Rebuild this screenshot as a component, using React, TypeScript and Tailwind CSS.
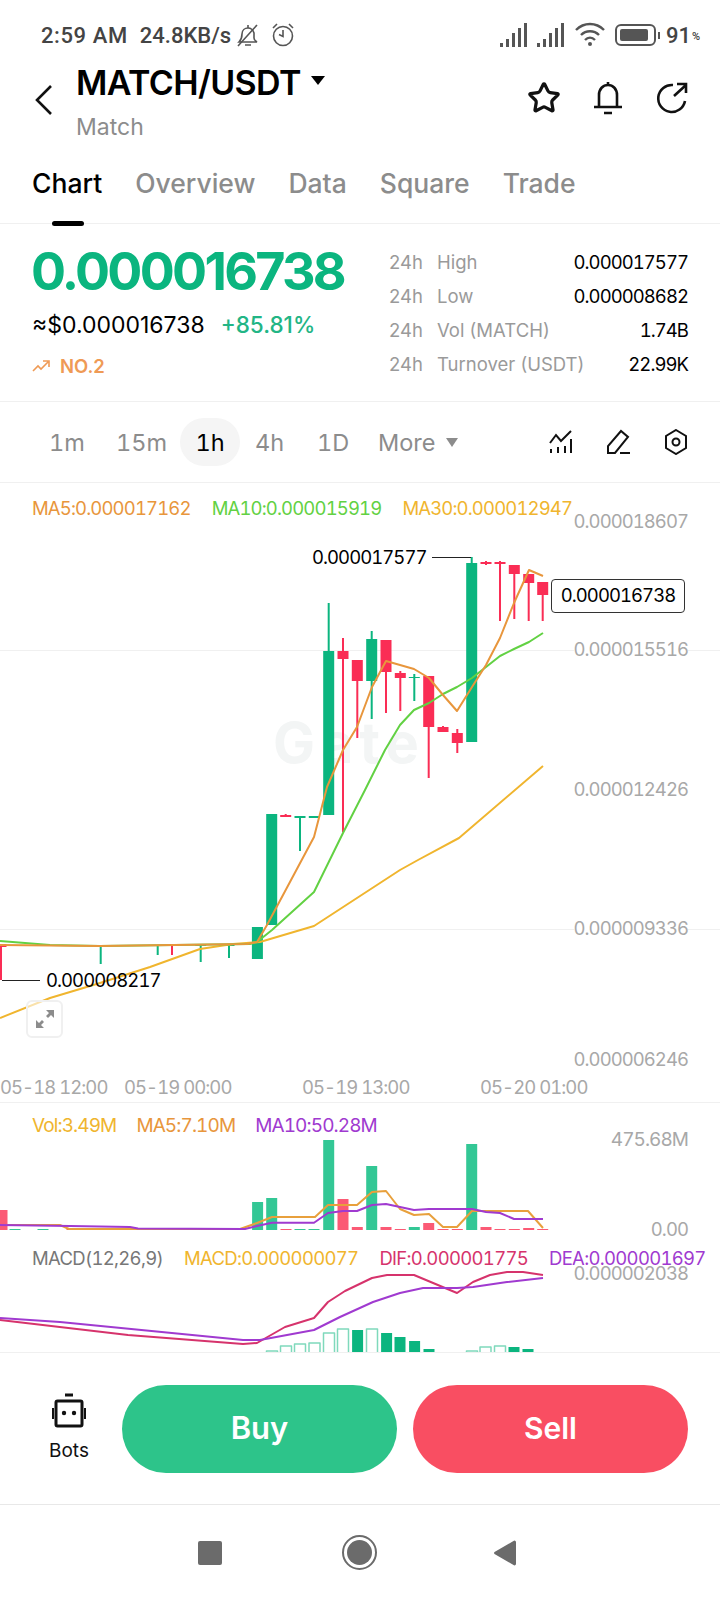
import { Star } from "lucide-react";

// candles: x, wick top, wick bottom, body top, body bottom, up
const candles: [number, number, number, number, number, boolean][] = [
  [1, 944, 980, 944, 947, false],
  [100.7, 945, 964, 945, 946, true],
  [157.7, 945, 955, 945, 946, true],
  [172, 945, 955, 945, 946, false],
  [200.7, 945, 962, 945, 946, true],
  [229, 945, 958, 945, 946, true],
  [257.4, 927, 959, 927, 959, true],
  [271.7, 814, 925, 814, 925, true],
  [285.7, 814, 817, 815, 817, false],
  [300, 816, 851, 816, 818, true],
  [314.3, 816, 818, 816, 818, true],
  [328.7, 603, 815, 651, 815, true],
  [343, 638, 832, 651, 659, false],
  [357.3, 660, 738, 660, 681, false],
  [371.7, 631, 719, 639, 681, true],
  [386, 640, 713, 640, 672, false],
  [400.3, 671, 711, 673, 678, false],
  [414.3, 674, 701, 677, 678, true],
  [428.7, 676, 778, 676, 727, false],
  [443, 726, 732, 727, 732, false],
  [457.3, 729, 753, 733, 743, false],
  [471.7, 557, 742, 563, 742, true],
  [486, 561, 565, 562, 564, false],
  [500, 561, 621, 562, 564, false],
  [514.3, 565, 619, 565, 574, false],
  [528.7, 574, 621, 574, 583, false],
  [542.7, 582, 621, 582, 595, false],
];

const ma5 = "0,945 100,946 247,944 257,942 267,925 314,837 327,787 343,750 357,727 372,687 386,661 400,665 414,669 429,678 443,695 457,711 472,687 486,665 500,638 514,603 529,570 543,576";
const ma10 = "0,941 50,945 100,946 250,944 257,942 272,930 314,892 343,833 365,790 385,750 400,725 414,710 429,703 443,694 457,687 472,678 486,667 500,656 514,649 529,642 543,633";
const ma30 = "0,1018 50,998 100,983 150,967 200,949 233,944 260,942 314,926 400,870 418,860 459,838 543,766";

const volBars: [number, number, boolean][] = [
  [2, 1210, false], [257.6, 1202, true], [271.7, 1198, true], [286, 1229, false], [300, 1229, true], [314, 1229, true],
  [328.7, 1140, true], [343, 1199, false], [357.3, 1227, false], [371.7, 1166, true], [386, 1227, false], [400.3, 1229, false],
  [414.3, 1227, true], [428.7, 1223, false], [443, 1229, false], [457.3, 1229, false], [471.7, 1144, true], [486, 1227, false],
  [500, 1229, false], [514.3, 1229, false], [528.7, 1228, false], [542.7, 1229, false],
  [15, 1229, true], [43, 1229, true], [72, 1229, false],
];

const volMa5 = "0,1225 60,1225 69,1229 138,1229 240,1229 257,1223 272,1217 315,1217 328,1205 357,1205 372,1192 386,1191 400,1209 414,1215 429,1214 443,1227 457,1227 472,1211 486,1211 528,1211 543,1228";
const volMa10 = "0,1225 70,1226 130,1227 138,1228.5 245,1229 257,1226 272,1222.7 314,1222.7 328,1213 343,1211 357,1211 372,1205 386,1204 400,1207 414,1210 429,1209 472,1209 486,1212 500,1213 514,1219 543,1219";
const dif = "0,1320 128,1335 243,1344 257,1343 285,1327 314,1318 328,1302 345,1291 372,1278 387,1275 414,1275 457,1293 473,1282 490,1275 507,1272 523,1272 543,1275";
const dea = "0,1318 60,1322 243,1340 260,1340 314,1330 340,1317 373,1302 400,1293 423,1288 457,1288 473,1287 507,1282 543,1278";

const macdBars: [number, number, boolean][] = [
  [272, 1351, false], [286, 1346, false], [300, 1344, false], [314.5, 1343, false], [329, 1333, false], [343, 1329, false],
  [357.6, 1330, true], [372, 1329, false], [386.6, 1333, true], [400, 1337, true], [414.6, 1341, true], [429, 1349, true],
  [472, 1351, false], [485.5, 1347, false], [500, 1346, false], [514, 1347, true], [528, 1349, true],
];

function Signal() {
  return (
    <svg width="28" height="26" viewBox="0 0 28 26" fill="#555">
      <rect x="0" y="21" width="3" height="4" />
      <rect x="6" y="17" width="3" height="8" />
      <rect x="12" y="11" width="3" height="14" />
      <rect x="18" y="6" width="3" height="19" />
      <rect x="24" y="1" width="3" height="24" />
    </svg>
  );
}

export default function App() {
  return (
    <div className="w-[720px] h-[1600px] bg-white flex flex-col overflow-hidden font-['Inter',sans-serif]">
      {/* status bar */}
      <div className="h-[56px] pt-[14px] pl-[41px] pr-[20px] flex items-center justify-between text-[#444] font-['Roboto',sans-serif] font-medium text-[22px]">
        <div className="flex items-center">
          <span className="tracking-[0.6px]">2:59 AM</span>
          <span className="ml-[12px]">24.8KB/s</span>
          <svg className="ml-[5px]" width="24" height="26" viewBox="0 0 24 26" fill="none" stroke="#555" strokeWidth="1.6">
            <path d="M3 20c2-2 3-4 3-8 0-4 3-6 6-6s5 2 6 5v5c0 2 1 3 3 4z" />
            <path d="M9 23h6M2 24 21 3M12 3v3" />
          </svg>
          <svg className="ml-[11px]" width="24" height="26" viewBox="0 0 24 26" fill="none" stroke="#555" strokeWidth="1.6">
            <circle cx="12" cy="14" r="9.5" />
            <path d="M12 8v6.5l-4-2M2 6l4-4M22 6l-4-4" />
          </svg>
        </div>
        <div className="flex items-center">
          <Signal />
          <div className="ml-[9px]"><Signal /></div>
          <svg className="ml-[10px]" width="30" height="28" viewBox="0 0 30 28" fill="none" stroke="#555" strokeWidth="2.4">
            <path d="M1 9c8-8 20-8 28 0M6 14c5-5 13-5 18 0M10 19c3-3 7-3 10 0" />
            <circle cx="15" cy="23" r="2" fill="#555" stroke="none" />
          </svg>
          <div className="ml-[10px] w-[41px] h-[22px] rounded-[6px] border-2 border-[#555] p-[3px] flex">
            <div className="w-[90%] bg-[#555] rounded-[2px]" />
          </div>
          <div className="w-[2px] h-[7px] bg-[#555] ml-[2px]" />
          <span className="ml-[6px]">91</span>
          <span className="text-[11px] ml-[1px] mt-[4px]">%</span>
        </div>
      </div>

      {/* header */}
      <div className="h-[92px] flex items-start relative">
        <svg className="absolute left-[34px] top-[28px]" width="20" height="32" viewBox="0 0 20 32" fill="none" stroke="#111" strokeWidth="2.6">
          <path d="M17 2 3 16l14 14" />
        </svg>
        <div className="ml-[76px] flex flex-col">
          <div className="flex items-center h-[50px] mt-[1px]">
            <span className="text-[34px] font-semibold text-black tracking-[-0.6px]">MATCH/USDT</span>
            <span className="ml-[10px] w-0 h-0 border-l-[7px] border-r-[7px] border-t-[9px] border-l-transparent border-r-transparent border-t-black mt-[-4px]" />
          </div>
          <span className="text-[23px] text-[#8c8c8c] mt-[6px] leading-[28px]">Match</span>
        </div>
        <div className="ml-auto mr-[31px] mt-[24px] flex items-center gap-[30px]">
          <Star size={34} strokeWidth={2.3} color="#111" />
          <svg width="34" height="36" viewBox="0 0 34 36" fill="none" stroke="#111" strokeWidth="2.6">
            <path d="M8 27V15c0-6 4-10 9-10s9 4 9 10v12M3 27h28M13 33h8M17 2v3" />
          </svg>
          <svg width="34" height="34" viewBox="0 0 34 34" fill="none" stroke="#111" strokeWidth="2.6">
            <path d="M30 20A13.5 13.5 0 1 1 18 4M19 15 31 4M22 3h9v9" />
          </svg>
        </div>
      </div>

      {/* tabs */}
      <div className="h-[76px] border-b border-[#f0f0f0] pl-[32px] flex items-start pt-[19px] gap-[33px] text-[26.5px] text-[#8c8c8c] font-medium leading-[32px]">
        <div className="relative text-black">
          Chart
          <div className="absolute left-[20px] top-[54px] w-[32px] h-[5px] rounded-full bg-black" />
        </div>
        <span>Overview</span>
        <span>Data</span>
        <span>Square</span>
        <span>Trade</span>
      </div>

      {/* price stats */}
      <div className="h-[178px] border-b border-[#f0f0f0] pl-[32px] pr-[32px] flex justify-between">
        <div className="flex flex-col">
          <div className="text-[52px] font-bold text-[#0bb57f] leading-[60px] mt-[18px] tracking-[-2.7px] ml-[-1px]">0.000016738</div>
          <div className="flex items-center mt-[8px] text-[23px] leading-[30px]">
            <span className="text-black">≈$0.000016738</span>
            <span className="ml-[16px] text-[22.5px] text-[#22b585] font-medium">+85.81%</span>
          </div>
          <div className="flex items-center mt-[13px]">
            <svg width="18" height="14" viewBox="0 0 18 14" fill="none" stroke="#ef9a55" strokeWidth="1.6">
              <path d="M1 12 6 7l3 3 7-7M11 2h6v6" />
            </svg>
            <span className="ml-[10px] text-[18.5px] font-semibold text-[#ef9a55] leading-[26px]">NO.2</span>
          </div>
        </div>
        <div className="w-[299px] flex flex-col pt-[21px] text-[18.5px] leading-[34px]">
          <StatRow name="High" value="0.000017577" />
          <StatRow name="Low" value="0.000008682" />
          <StatRow name="Vol (MATCH)" value="1.74B" />
          <StatRow name="Turnover (USDT)" value="22.99K" />
        </div>
      </div>

      {/* timeframes */}
      <div className="h-[81px] border-b border-[#f0f0f0] flex items-center text-[23.5px] tabular-nums text-[#8c8c8c] relative">
        <span className="ml-[49px] w-[34px] mt-[2px]">1m</span>
        <span className="ml-[33px] w-[48px] mt-[2px]">15m</span>
        <span className="ml-[16px] w-[60px] h-[48px] pt-[2px] rounded-full bg-[#f5f5f5] text-black flex items-center justify-center">1h</span>
        <span className="ml-[15px] w-[29px] mt-[2px]">4h</span>
        <span className="ml-[33px] w-[28px] mt-[2px]">1D</span>
        <span className="ml-[33px] mt-[2px]">More</span>
        <span className="ml-[11px] w-0 h-0 border-l-[6px] border-r-[6px] border-t-[9px] border-l-transparent border-r-transparent border-t-[#8c8c8c]" />
        <div className="ml-auto mr-[32px] flex items-center gap-[33px]">
          <svg width="24" height="24" viewBox="0 0 24 24" fill="none" stroke="#111" strokeWidth="2">
            <path d="M1 13 7 5l5 6 10-10M2 23v-4M9 23v-6M16 23v-7M22 23V9" />
          </svg>
          <svg width="25" height="26" viewBox="0 0 25 26" fill="none" stroke="#111" strokeWidth="2">
            <path d="M2 24v-7L15 2l7 6L9 24zM14 24h10" />
          </svg>
          <svg width="24" height="26" viewBox="0 0 24 26" fill="none" stroke="#111" strokeWidth="2">
            <path d="m12 1 10 6v12l-10 6-10-6V7z" />
            <circle cx="12" cy="13" r="3.5" />
          </svg>
        </div>
      </div>

      {/* main chart */}
      <div className="h-[620px] border-b border-[#f0f0f0] relative text-[18.5px] tabular-nums tracking-[-0.95px]">
        <div className="absolute left-[273px] top-[230px] text-[56px] font-bold leading-[60px] text-[#f3f5f5] tracking-[6px]">Gate</div>

        <svg className="absolute inset-0" width="720" height="619" viewBox="0 483 720 619" fill="none" strokeLinejoin="round">
          <path d="M0 650.5h720M0 929.5h720" stroke="#f0f0f0" />
          {candles.map(([x, wt, wb, bt, bb, up]) => (
            <g key={x} fill={up ? "#0bb57f" : "#fa2d55"}>
              <rect x={x - 1} y={wt} width="2" height={wb - wt} />
              <rect x={x - 5.5} y={bt} width="11" height={bb - bt} />
            </g>
          ))}
          <polyline points={ma30} stroke="#f0b52e" strokeWidth="2" />
          <polyline points={ma10} stroke="#62d143" strokeWidth="2" />
          <polyline points={ma5} stroke="#e8963c" strokeWidth="2" />
          <path d="M432 557.5h39M2 980.5h38" stroke="#222" />
        </svg>

        <div className="relative pl-[32px] pt-[13px] flex gap-[21px] leading-[24px] tracking-[-0.85px]">
          <span className="text-[#e8963c]">MA5:0.000017162</span>
          <span className="text-[#62d143]">MA10:0.000015919</span>
          <span className="text-[#f0b52e]">MA30:0.000012947</span>
        </div>

        <span className="absolute right-[32px] top-[26px] leading-[24px] text-[#a8a8a8]">0.000018607</span>
        <span className="absolute right-[32px] top-[154px] leading-[24px] text-[#a8a8a8] bg-white">0.000015516</span>
        <span className="absolute right-[32px] top-[294px] leading-[24px] text-[#a8a8a8]">0.000012426</span>
        <span className="absolute right-[32px] top-[433px] leading-[24px] text-[#a8a8a8] bg-white">0.000009336</span>
        <span className="absolute right-[32px] top-[564px] leading-[24px] text-[#a8a8a8]">0.000006246</span>

        <span className="absolute left-[312px] top-[62px] leading-[24px] text-black">0.000017577</span>
        <span className="absolute left-[46px] top-[485px] leading-[24px] text-black">0.000008217</span>
        <span className="absolute left-[551px] top-[96px] w-[134px] h-[34px] rounded-[4px] border border-[#333] bg-white flex items-center justify-center text-black">0.000016738</span>

        <div className="absolute left-[26px] top-[517px] w-[37px] h-[38px] rounded-[6px] border-2 border-[#f0f0f0] bg-white/60 flex items-center justify-center">
          <svg width="20" height="20" viewBox="0 0 20 20" fill="#8c8c8c">
            <path d="M11 1h8v8l-3-3-3 3-2-2 3-3zM9 19H1v-8l3 3 3-3 2 2-3 3z" />
          </svg>
        </div>

        <span className="absolute left-0 top-[592px] leading-[24px] text-[#a8a8a8]">05-18 12:00</span>
        <span className="absolute left-[124px] top-[592px] leading-[24px] text-[#a8a8a8]">05-19 00:00</span>
        <span className="absolute left-[302px] top-[592px] leading-[24px] text-[#a8a8a8]">05-19 13:00</span>
        <span className="absolute left-[480px] top-[592px] leading-[24px] text-[#a8a8a8]">05-20 01:00</span>
      </div>

      {/* volume + macd */}
      <div className="h-[250px] border-b border-[#f0f0f0] relative text-[18.5px] tabular-nums tracking-[-0.95px] overflow-hidden">
        <svg className="absolute inset-0" width="720" height="249" viewBox="0 1103 720 249" fill="none" strokeLinejoin="round">
          {volBars.map(([x, top, up]) => (
            <rect key={x} x={x - 5.5} y={top} width="11" height={1230 - top} fill={up ? "#33c795" : "#fb5a75"} />
          ))}
          <polyline points={volMa5} stroke="#e8a03c" strokeWidth="2" />
          <polyline points={volMa10} stroke="#a03ad0" strokeWidth="2" />
          {macdBars.map(([x, top, filled]) => (
            <rect key={x} x={x - 5.5} y={top} width="11" height={1360 - top} fill={filled ? "#0bb57f" : "#fff"} stroke={filled ? "none" : "#7fd9bc"} strokeWidth="1.5" />
          ))}
          <polyline points={dif} stroke="#d6336c" strokeWidth="2" />
          <polyline points={dea} stroke="#a03ad0" strokeWidth="2" />
        </svg>

        <div className="relative pl-[32px] pt-[11px] flex gap-[20px] leading-[24px] text-[19px] tracking-[-0.9px]">
          <span className="text-[#f0b52e]">Vol:3.49M</span>
          <span className="text-[#e8963c]">MA5:7.10M</span>
          <span className="text-[#a03ad0]">MA10:50.28M</span>
        </div>
        <span className="absolute right-[32px] top-[25px] leading-[24px] text-[19px] text-[#a8a8a8]">475.68M</span>
        <span className="absolute right-[32px] top-[114px] leading-[24px] text-[#a8a8a8]">0.00</span>
        <span className="absolute right-[32px] top-[158px] leading-[24px] text-[#a8a8a8]">0.000002038</span>
        <div className="absolute left-[32px] top-[143px] flex gap-[21px] leading-[24px] whitespace-nowrap tracking-[-0.7px]">
          <span className="text-[#777]">MACD(12,26,9)</span>
          <span className="text-[#f0b52e]">MACD:0.000000077</span>
          <span className="text-[#d6336c]">DIF:0.000001775</span>
          <span className="text-[#a03ad0]">DEA:0.000001697</span>
        </div>
      </div>

      {/* actions */}
      <div className="h-[152px] border-b border-[#e8e8e8] flex items-center pl-[32px] pr-[32px]">
        <div className="w-[74px] flex flex-col items-center mt-[-2px]">
          <svg width="36" height="36" viewBox="0 0 36 36" fill="none">
            <path d="M14 2h8" stroke="#111" strokeWidth="3" />
            <rect x="5" y="8" width="26" height="25" rx="1.5" stroke="#111" strokeWidth="3" />
            <path d="M2 15v11M34 15v11" stroke="#111" strokeWidth="2" />
            <circle cx="13" cy="20" r="2.2" fill="#111" />
            <circle cx="23" cy="20" r="2.2" fill="#111" />
          </svg>
          <span className="text-[19px] text-[#111] mt-[10px] leading-[24px]">Bots</span>
        </div>
        <div className="ml-[16px] w-[275px] h-[88px] rounded-[44px] bg-[#2dc48a] flex items-center justify-center text-white text-[31px] font-semibold">Buy</div>
        <div className="ml-[16px] w-[275px] h-[88px] rounded-[44px] bg-[#f94e62] flex items-center justify-center text-white text-[30px] font-semibold">Sell</div>
      </div>

      {/* nav bar */}
      <div className="flex-1 relative flex items-center">
        <div className="ml-[198px] w-[24px] h-[24px] rounded-[2px] bg-[#6b6b6b]" />
        <div className="ml-[120px] w-[35px] h-[35px] rounded-full border-[2.5px] border-[#6b6b6b] p-[3px]">
          <div className="w-full h-full rounded-full bg-[#6b6b6b]" />
        </div>
        <svg className="ml-[116px]" width="24" height="28" viewBox="0 0 24 28" fill="#6b6b6b">
          <path d="M23 3v22a1.5 1.5 0 0 1-2.500 1L1.500 15a1.500 1.500 0 0 1 0-2L20.500 2A1.500 1.500 0 0 1 23 3z" />
        </svg>
      </div>
    </div>
  );
}

function StatRow({ name, value }: { name: string; value: string }) {
  return (
    <div className="flex text-[#9a9a9a]">
      <span className="w-[48px]">24h</span>
      <span>{name}</span>
      <span className="ml-auto text-black text-[18.5px] tabular-nums tracking-[-0.95px]">{value}</span>
    </div>
  );
}
